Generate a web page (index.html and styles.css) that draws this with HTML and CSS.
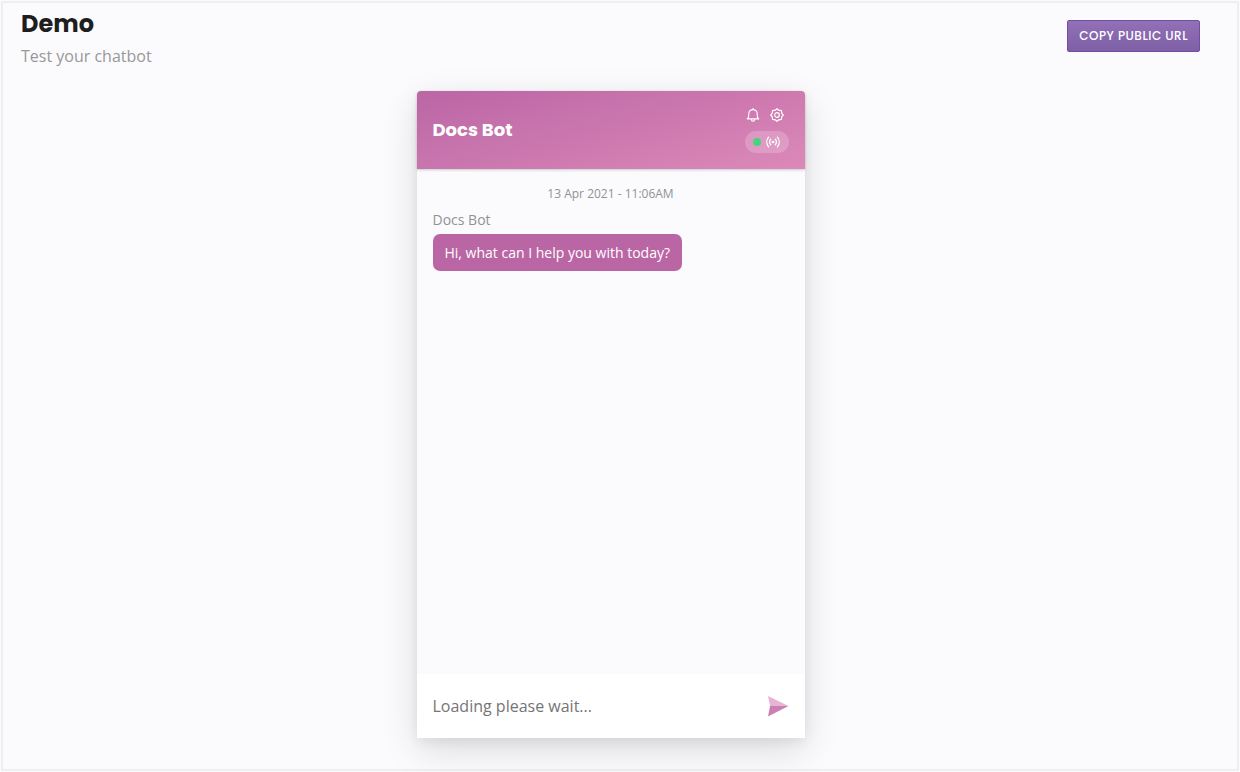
FILE: index.html
```html
<!DOCTYPE html>
<html lang="en">
<head>
<meta charset="utf-8">
<meta name="viewport" content="width=device-width, initial-scale=1">
<title>Demo</title>
<link rel="stylesheet" href="styles.css">
</head>
<body>
<div class="frame">
  <header class="page-header">
    <div>
      <h1 class="page-title">Demo</h1>
      <p class="page-subtitle">Test your chatbot</p>
    </div>
    <button class="copy-button" type="button">COPY PUBLIC URL</button>
  </header>
  <main class="stage">
    <section class="chat" aria-label="Docs Bot chat">
      <header class="chat-header">
        <h2 class="chat-title">Docs Bot</h2>
        <div class="chat-tools">
          <div class="tool-row">
            <button class="icon-button" type="button" aria-label="Notifications">
              <svg width="14" height="16" viewBox="0 0 14 16" fill="none" stroke="currentColor" stroke-width="1.1" stroke-linecap="round" stroke-linejoin="round"><path d="M7 1.4V2.6M1.3 11.9H12.7C11.5 11 11.2 9.8 11.2 8V6.700C11.2 4.200 9.300 2.600 7 2.600S2.800 4.200 2.800 6.700V8C2.800 9.800 2.500 11 1.300 11.900ZM5.400 12.200C5.400 14.900 8.600 14.900 8.600 12.200"/></svg>
            </button>
            <button class="icon-button" type="button" aria-label="Settings">
              <svg width="14" height="14" viewBox="0 0 14 14" fill="none" stroke="currentColor" stroke-width="1.2" stroke-linejoin="round"><path d="M7 .7L8.7 2.2 11.4 2.6 11.8 5.3 13.3 7 11.8 8.7 11.4 11.4 8.7 11.8 7 13.3 5.3 11.8 2.6 11.4 2.2 8.7 .7 7 2.2 5.3 2.6 2.6 5.3 2.2Z"/><circle cx="7" cy="7" r="2.3"/></svg>
            </button>
          </div>
          <div class="status">
            <span class="status-dot"></span>
            <svg width="14" height="12" viewBox="0 0 14 12" fill="none" stroke="currentColor" stroke-width="1.3" stroke-linecap="round"><path d="M2.6 1.2C.2 4 .2 8 2.6 10.8M11.4 1.2C13.8 4 13.8 8 11.4 10.8M4.7 3.2C3.4 4.8 3.4 7.2 4.7 8.8M9.3 3.2C10.6 4.8 10.6 7.2 9.3 8.8"/><circle cx="7" cy="6" r="1.3" fill="currentColor" stroke="none"/></svg>
          </div>
        </div>
      </header>
      <div class="chat-log">
        <p class="chat-time">13 Apr 2021 - 11:06AM</p>
        <p class="chat-sender">Docs Bot</p>
        <p class="bubble">Hi, what can I help you with today?</p>
      </div>
      <form class="composer">
        <input class="composer-input" type="text" aria-label="Message" placeholder="Loading please wait...">
        <button class="icon-button" type="button" aria-label="Send">
          <svg width="22" height="22" viewBox="0 0 22 22"><path d="M1 1L21.500 11H3Z" fill="#e9b4d3"/><path d="M3 11H21.500L1 21.500Z" fill="#cb80b3"/></svg>
        </button>
      </form>
    </section>
  </main>
</div>
</body>
</html>
```
FILE: styles.css
```css
* {
  box-sizing: border-box;
}

body {
  margin: 0;
  padding: 1px;
  background: #fbfbfd;
  font-family: "Open Sans", "Noto Sans", sans-serif;
  color: #1e1e1e;
}

h1, h2, p {
  margin: 0;
}

button {
  font: inherit;
  cursor: pointer;
}

.frame {
  display: flex;
  flex-direction: column;
  min-height: calc(100vh - 2px);
  padding: 0 37px 31px 18px;
  border: 2px solid #efeff0;
}

.page-header {
  display: flex;
  justify-content: space-between;
  align-items: flex-start;
  padding-top: 6px;
}

.page-title {
  font: 700 24px/30px Poppins, Inter, sans-serif;
}

.page-subtitle {
  margin-top: 5px;
  font-size: 16px;
  line-height: 24px;
  color: #989898;
}

.copy-button {
  margin-top: 11px;
  padding: 0 11px;
  height: 32px;
  border: 1px solid #6f4fa0;
  border-radius: 2px;
  background: linear-gradient(#9270b8, #7e60a6);
  color: #fff;
  font: 500 12px/30px Poppins, Inter, sans-serif;
  letter-spacing: 0.5px;
}

.stage {
  flex: 1;
  display: flex;
  justify-content: center;
  padding-top: 23px;
}

.chat {
  display: flex;
  flex-direction: column;
  width: 100%;
  max-width: 388px;
  border-radius: 4px 4px 0 0;
  background: #fbfbfd;
  box-shadow: 0 12px 36px rgba(0, 0, 0, 0.13), 0 4px 12px rgba(0, 0, 0, 0.06);
}

.chat-header {
  display: flex;
  justify-content: space-between;
  align-items: center;
  padding: 16px;
  border-radius: 4px 4px 0 0;
  background: linear-gradient(165deg, #bb66a5, #dc89b9);
  box-shadow: 0 1px 3px rgba(0, 0, 0, 0.2);
  color: #fff;
}

.chat-title {
  font: 700 18px/28px Poppins, Inter, sans-serif;
}

.chat-tools {
  display: flex;
  flex-direction: column;
  align-items: center;
  gap: 8px;
}

.tool-row {
  display: flex;
  align-items: center;
  gap: 10px;
  height: 16px;
  padding-right: 4px;
}

.icon-button {
  display: flex;
  padding: 0;
  border: 0;
  background: none;
  color: inherit;
}

.status {
  display: flex;
  align-items: center;
  gap: 5px;
  height: 22px;
  padding: 0 9px 0 8px;
  border-radius: 11px;
  background: rgba(255, 255, 255, 0.2);
}

.status-dot {
  width: 8px;
  height: 8px;
  border-radius: 50%;
  background: #48d37c;
}

.chat-log {
  flex: 1;
  display: flex;
  flex-direction: column;
  align-items: flex-start;
  padding: 15px 16px;
}

.chat-time {
  align-self: center;
  font-size: 12px;
  line-height: 20px;
  color: #929292;
}

.chat-sender {
  margin: 6px 0 4px;
  font-size: 14px;
  line-height: 20px;
  color: #929292;
}

.bubble {
  padding: 8px 12px;
  border-radius: 7px;
  background: #ba66a5;
  color: #fff;
  font-size: 14px;
  line-height: 21px;
}

.composer {
  display: flex;
  align-items: center;
  gap: 12px;
  padding: 16px;
  background: #fff;
}

.composer-input {
  flex: 1;
  min-width: 0;
  height: 32px;
  padding: 0;
  border: 0;
  outline: 0;
  background: none;
  font: 16px/24px "Open Sans", "Noto Sans", sans-serif;
  color: #333;
}

.composer-input::placeholder {
  color: #757575;
  opacity: 1;
}
```
